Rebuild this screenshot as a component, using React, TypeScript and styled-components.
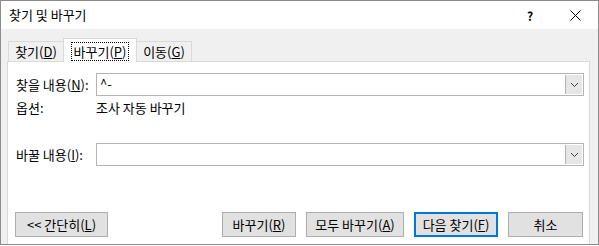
import React from 'react'
import styled, {createGlobalStyle} from 'styled-components'

const GlobalStyle = createGlobalStyle`
  html, body {
    margin: 0;
    padding: 0;
    background: #ffffff;
  }
  * {
    box-sizing: border-box;
  }
`

const font = `"Noto Sans CJK KR", "Noto Sans", sans-serif`

const Window = styled.div`
  width: 599px;
  height: 245px;
  border: 1px solid #8c8c8c;
  background: #f0f0f0;
  display: flex;
  flex-direction: column;
  font-family: ${font};
  font-size: 13px;
  color: #000;
  overflow: hidden;
`

const TitleBar = styled.div`
  height: 28px;
  background: #ffffff;
  display: flex;
  align-items: center;
  padding-left: 8px;
  flex-shrink: 0;
`

const Title = styled.div`
  flex: 1;
  line-height: 16px;
  margin-top: -1px;
`

const TitleButton = styled.div<{$w: number}>`
  width: ${p => p.$w}px;
  height: 28px;
  display: flex;
  align-items: center;
  justify-content: center;
  font-size: 12px;
  font-weight: bold;
`

const Body = styled.div`
  flex: 1;
  display: flex;
  flex-direction: column;
  padding: 9px 8px 0 6px;
`

const TabRow = styled.div`
  display: flex;
  align-items: flex-end;
  padding-left: 1px;
  height: 24px;
  position: relative;
  z-index: 1;
  margin-bottom: -1px;
`

const Tab = styled.div<{$active?: boolean; $w: number}>`
  width: ${p => p.$w}px;
  height: ${p => (p.$active ? '24px' : '21px')};
  padding-top: ${p => (p.$active ? '2px' : '0')};
  margin: ${p => (p.$active ? '0 -1px' : '0')};
  background: ${p => (p.$active ? '#ffffff' : '#f0f0f0')};
  border: 1px solid #d9d9d9;
  border-bottom: ${p => (p.$active ? 'none' : '1px solid #d9d9d9')};
  display: flex;
  align-items: center;
  justify-content: center;
  line-height: 16px;
  position: relative;
  z-index: ${p => (p.$active ? 2 : 1)};
`

const FocusRing = styled.span`
  border: 1px dotted #000;
  padding: 1px 2px;
  line-height: 15px;
`

const Panel = styled.div`
  flex: 1;
  background: #ffffff;
  border: 1px solid #d9d9d9;
  border-bottom: none;
  display: flex;
  flex-direction: column;
  padding: 11px 5px 0 8px;
`

const FieldRow = styled.div<{$top: number}>`
  display: flex;
  align-items: center;
  margin-top: ${p => p.$top}px;
`

const Label = styled.div`
  width: 80px;
  line-height: 16px;
  flex-shrink: 0;
  white-space: nowrap;
`

const Combo = styled.div`
  flex: 1;
  height: 23px;
  border: 1px solid #b4b4b4;
  background: #ffffff;
  display: flex;
  align-items: stretch;
`

const ComboText = styled.div`
  flex: 1;
  padding-left: 3px;
  line-height: 19px;
`

const DropButton = styled.div`
  width: 17px;
  background: #e6e6e6;
  border-left: 1px solid #b4b4b4;
  margin: 1px;
  margin-left: 0;
  display: flex;
  align-items: center;
  justify-content: center;
`

const OptionRow = styled.div`
  display: flex;
  align-items: center;
  margin-top: 4px;
  height: 16px;
  line-height: 16px;
`

const ButtonRow = styled.div`
  display: flex;
  align-items: center;
  margin-top: 46px;
`

const ButtonGroup = styled.div`
  display: flex;
  gap: 10px;
  margin-left: auto;
  margin-right: 1px;
`

const Button = styled.div<{$w: number; $default?: boolean}>`
  width: ${p => p.$w}px;
  height: 25px;
  background: #e1e1e1;
  border: ${p => (p.$default ? '2px solid #0078d7' : '1px solid #adadad')};
  display: flex;
  align-items: center;
  justify-content: center;
  line-height: 16px;
  white-space: nowrap;
`

const Key = styled.span`
  text-decoration: underline;
  text-underline-offset: 1px;
`

const Chevron = () => (
  <svg width="9" height="6" viewBox="0 0 9 6">
    <path d="M1 1 L4.5 4.5 L8 1" fill="none" stroke="#404040" strokeWidth="1" />
  </svg>
)

const CloseIcon = () => (
  <svg width="11" height="11" viewBox="0 0 11 11">
    <path d="M0.5 0.5 L10.5 10.5 M10.5 0.5 L0.5 10.5" stroke="#000" strokeWidth="1" />
  </svg>
)

const App: React.FunctionComponent = () => {
  return (
    <>
      <GlobalStyle />
      <Window>
        <TitleBar>
          <Title>찾기 및 바꾸기</Title>
          <TitleButton $w={44}>?</TitleButton>
          <TitleButton $w={46}>
            <CloseIcon />
          </TitleButton>
        </TitleBar>
        <Body>
          <TabRow>
            <Tab $w={56}>찾기(<Key>D</Key>)</Tab>
            <Tab $w={74} $active>
              <FocusRing>바꾸기(<Key>P</Key>)</FocusRing>
            </Tab>
            <Tab $w={56}>이동(<Key>G</Key>)</Tab>
          </TabRow>
          <Panel>
            <FieldRow $top={0}>
              <Label>찾을 내용(<Key>N</Key>):</Label>
              <Combo>
                <ComboText>^-</ComboText>
                <DropButton>
                  <Chevron />
                </DropButton>
              </Combo>
            </FieldRow>
            <OptionRow>
              <Label>옵션:</Label>
              <div>조사 자동 바꾸기</div>
            </OptionRow>
            <FieldRow $top={27}>
              <Label>바꿀 내용(<Key>I</Key>):</Label>
              <Combo>
                <ComboText />
                <DropButton>
                  <Chevron />
                </DropButton>
              </Combo>
            </FieldRow>
            <ButtonRow>
              <Button $w={93} style={{marginLeft: -1}}>
                &lt;&lt; 간단히(<Key>L</Key>)
              </Button>
              <ButtonGroup>
                <Button $w={74}>바꾸기(<Key>R</Key>)</Button>
                <Button $w={98}>모두 바꾸기(<Key>A</Key>)</Button>
                <Button $w={84} $default>다음 찾기(<Key>F</Key>)</Button>
                <Button $w={75}>취소</Button>
              </ButtonGroup>
            </ButtonRow>
          </Panel>
        </Body>
      </Window>
    </>
  )
}

export default App
